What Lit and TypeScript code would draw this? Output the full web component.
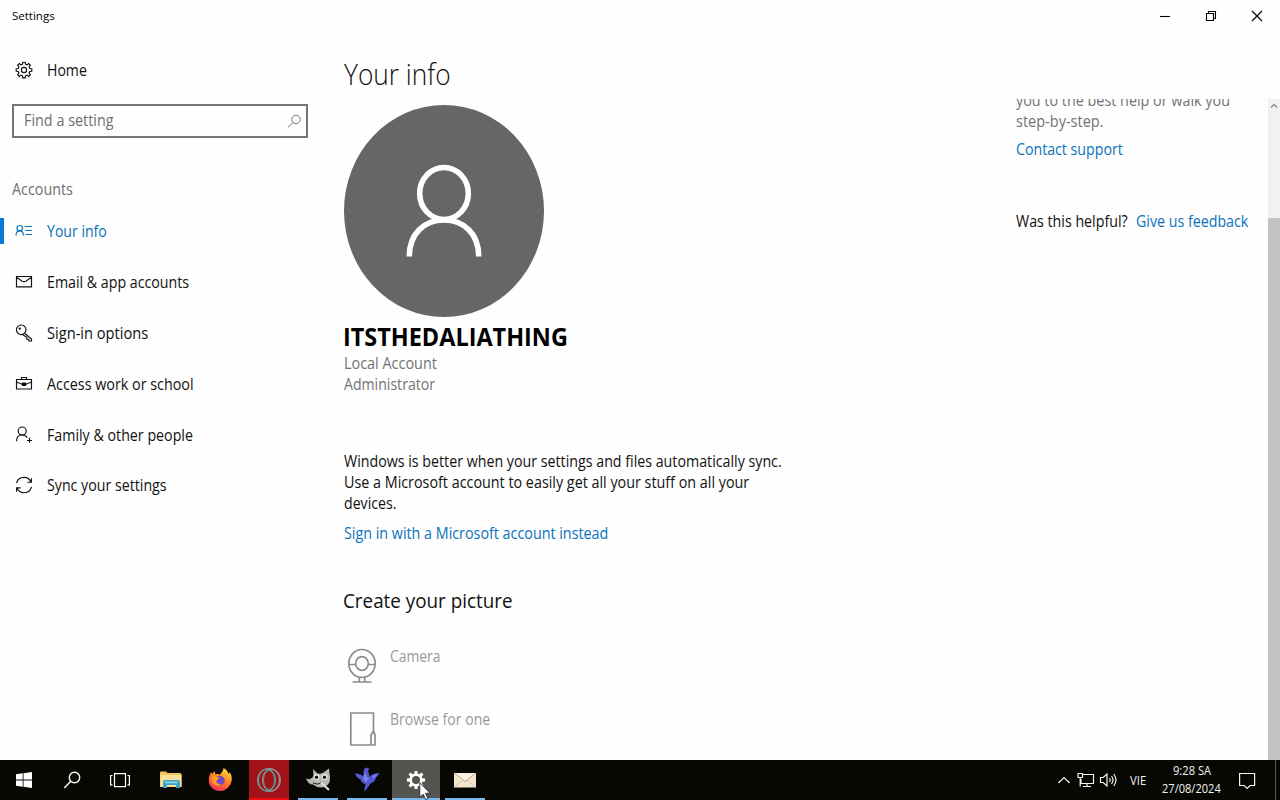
import { LitElement, html, css, svg } from 'lit';
import { customElement, property } from 'lit/decorators.js';

// One line of text, condensed or stretched to an exact width
@customElement('fit-text')
export class FitText extends LitElement {
  @property({ type: Number }) w = 0;

  static styles = css`
    :host {
      display: block;
      white-space: nowrap;
    }
    span {
      display: inline-block;
      transform-origin: 0 50%;
    }
  `;

  firstUpdated() {
    const span = this.renderRoot.querySelector('span')!;
    const natural = span.offsetWidth;
    if (!natural || !this.w) return;
    this.style.width = `${this.w}px`;
    span.style.transform = `scaleX(${this.w / natural})`;
  }

  render() {
    return html`<span><slot></slot></span>`;
  }
}

// points of a cog outline around (cx, cy)
const cog = (cx: number, cy: number, outer: number, inner: number, teeth: number) => {
  const pts: string[] = [];
  const step = (Math.PI * 2) / teeth;
  for (let i = 0; i < teeth; i++) {
    const a = i * step - Math.PI / 2;
    [[-0.32, inner], [-0.2, outer], [0.2, outer], [0.32, inner]].forEach(([d, r]) => {
      const t = a + d * step;
      pts.push(`${(cx + r * Math.cos(t)).toFixed(2)},${(cy + r * Math.sin(t)).toFixed(2)}`);
    });
  }
  return pts.join(' ');
};

const icons = {
  home: svg`<polygon points="${cog(9, 9, 7.9, 6, 8)}"/><circle cx="9" cy="9" r="2.6"/>`,
  info: svg`<circle cx="4.7" cy="6.2" r="2.7"/><path d="M1 13.500c0-2.8 1.4-4.6 3.7-4.6S8.4 10.700 8.4 13.500M9.5 4.500H17M10.5 8.500H17M10.5 12.500H17"/>`,
  mail: svg`<path d="M1.500 3.500h15v10.300h-15zM1.500 4.200 6.800 7.900q2.200 1.400 4.400 0l5.300-3.700"/>`,
  key: svg`<circle cx="6.2" cy="5.8" r="4.8"/><circle cx="4.8" cy="4.6" r=".6"/><path d="M9.6 9.2 16.5 15v2h-2.7v-1.8h-2v-2L7.5 10.4"/>`,
  work: svg`<path d="M1.500 4.500h15v9.500h-15zM6.500 4.500v-2h5v2M1.500 7l5.500 2.200h4L16.500 7M7.4 8.100h3.2v2.200H7.4z"/>`,
  family: svg`<circle cx="7.2" cy="5" r="4"/><path d="M1.500 15.3c0-3.8 2.2-6.3 5.7-6.3 2.3 0 3.9 1 4.9 2.6M14.500 11.8v5M12 14.500h5"/>`,
  sync: svg`<path d="M1.5 7.2C2.5 3.4 5.4 1.3 9 1.3c3.400 0 5.800 1.900 7 4.700M16.400 2.200V6.200H12.400M16.500 10.800C15.500 14.600 12.600 16.700 9 16.700c-3.400 0-5.800-1.900-7-4.700M1.600 15.800V11.800H5.600"/>`,
};

const navItems = [
  { icon: icons.info, label: 'Your info', w: 60, active: true },
  { icon: icons.mail, label: 'Email & app accounts', w: 142 },
  { icon: icons.key, label: 'Sign-in options', w: 101 },
  { icon: icons.work, label: 'Access work or school', w: 147 },
  { icon: icons.family, label: 'Family & other people', w: 146 },
  { icon: icons.sync, label: 'Sync your settings', w: 120 },
];

@customElement('settings-nav')
export class SettingsNav extends LitElement {
  static styles = css`
    :host {
      display: block;
      width: 320px;
    }
    .row {
      display: flex;
      align-items: center;
      height: 50.8px;
      box-sizing: border-box;
      padding-left: 15px;
      gap: 14px;
      position: relative;
    }
    .home {
      height: 32px;
      margin-top: 22px;
    }
    .row svg {
      fill: none;
      stroke: currentColor;
      stroke-width: 1.15;
      flex: none;
    }
    .active {
      color: #0a72bb;
    }
    .active::before {
      content: '';
      position: absolute;
      left: 0;
      top: 12px;
      width: 4px;
      height: 26px;
      background: #0a78d6;
    }
    .search {
      display: flex;
      align-items: center;
      justify-content: space-between;
      box-sizing: border-box;
      width: 296px;
      height: 34px;
      margin: 18px 0 0 12px;
      padding: 0 4px 2px 10px;
      border: 2px solid #767676;
      color: #707070;
    }
    .search svg {
      fill: none;
      stroke: #777;
      stroke-width: 1;
      margin-top: 2px;
    }
    .group {
      color: #707070;
      margin: 40px 0 6px 12px;
      line-height: 22px;
    }
  `;

  render() {
    return html`
      <div class="row home">
        <svg width="18" height="18">${icons.home}</svg>
        <fit-text w="40">Home</fit-text>
      </div>
      <div class="search">
        <fit-text w="90">Find a setting</fit-text>
        <svg width="15" height="15"><circle cx="9" cy="5.500" r="4.200"/><path d="M6 8.500.800 13.600"/></svg>
      </div>
      <div class="group"><fit-text w="61">Accounts</fit-text></div>
      ${navItems.map(
        (item) => html`
          <div class="row ${item.active ? 'active' : ''}">
            <svg width="18" height="18">${item.icon}</svg>
            <fit-text w=${item.w}>${item.label}</fit-text>
          </div>
        `
      )}
    `;
  }
}

@customElement('account-page')
export class AccountPage extends LitElement {
  static styles = css`
    :host {
      display: block;
      width: 672px;
      padding-left: 24px;
      box-sizing: border-box;
      overflow: hidden;
    }
    h1, h2, p {
      margin: 0;
      font-weight: 400;
    }
    h1 {
      font-size: 28.5px;
      font-weight: 300;
      line-height: 40px;
      margin-top: 22px;
    }
    .avatar {
      display: block;
      margin-top: 11px;
    }
    .name {
      font-size: 25px;
      font-weight: 700;
      line-height: 36px;
      color: #000;
      margin: 1px 0 0 -1px;
    }
    .role {
      color: #737373;
      line-height: 21px;
      margin-top: -1px;
    }
    .sync {
      line-height: 21px;
      margin-top: 56px;
    }
    a {
      display: block;
      color: #0a72bb;
      line-height: 21px;
      margin-top: 9px;
    }
    h2 {
      font-size: 20.5px;
      line-height: 28px;
      margin: 42px 0 0 -1px;
    }
    .source {
      display: flex;
      gap: 10px;
      color: #999;
      line-height: 21px;
      height: 63px;
    }
    .sources {
      margin-top: 32px;
    }
    .source svg {
      width: 36px;
      height: 40px;
      fill: none;
      stroke: #8c8c8c;
      stroke-width: 1.700;
    }
  `;

  render() {
    return html`
      <h1><fit-text w="107">Your info</fit-text></h1>
      <svg class="avatar" width="200" height="212" viewBox="0 0 200 212">
        <ellipse cx="100" cy="106" rx="100" ry="106" fill="#666"/>
        <g fill="none" stroke="#fff" stroke-width="5.600">
          <ellipse cx="100" cy="88.500" rx="24.300" ry="26"/>
          <path d="M65.300 151.500C65.300 129 80 115 100 115s34.700 14 34.700 36.500"/>
        </g>
      </svg>
      <p class="name"><fit-text w="225">ITSTHEDALIATHING</fit-text></p>
      <div class="role">
        <fit-text w="93">Local Account</fit-text>
        <fit-text w="91">Administrator</fit-text>
      </div>
      <div class="sync">
        <fit-text w="438">Windows is better when your settings and files automatically sync.</fit-text>
        <fit-text w="405">Use a Microsoft account to easily get all your stuff on all your</fit-text>
        <fit-text w="52">devices.</fit-text>
      </div>
      <a><fit-text w="264">Sign in with a Microsoft account instead</fit-text></a>
      <h2><fit-text w="170">Create your picture</fit-text></h2>
      <div class="sources">
        <div class="source">
          <svg>
            <ellipse cx="18" cy="17.500" rx="13.200" ry="14"/>
            <ellipse cx="18" cy="17.500" rx="6.300" ry="6.800"/>
            <path d="M4.800 18.500h6.500M24.700 18.500h6.500M15.300 31.500v4M20.700 31.500v4M8.500 36h19"/>
          </svg>
          <fit-text w="50">Camera</fit-text>
        </div>
        <div class="source">
          <svg>
            <path d="M29.500 21.500V4H6.800V36H31V26l-1.500-4-2.500 4v10"/>
          </svg>
          <fit-text w="100">Browse for one</fit-text>
        </div>
      </div>
    `;
  }
}

@customElement('help-pane')
export class HelpPane extends LitElement {
  static styles = css`
    :host {
      display: flex;
      flex: 1;
      margin-top: 67px;
      overflow: hidden;
      justify-content: space-between;
    }
    .text {
      line-height: 21px;
      margin-top: -9px;
    }
    .muted {
      color: #737373;
    }
    .link {
      color: #0a72bb;
    }
    .contact {
      margin-top: 7px;
    }
    .feedback {
      display: flex;
      gap: 8px;
      margin-top: 51px;
    }
    .bar {
      width: 12px;
      background: #f1f1f1;
      display: flex;
      flex-direction: column;
      justify-content: space-between;
    }
    .bar svg {
      fill: none;
      stroke: #888;
      stroke-width: 1.300;
    }
    .thumb {
      height: 542px;
      background: #c2c2c2;
    }
  `;

  render() {
    return html`
      <div class="text">
        <div class="muted">
          <fit-text w="214">you to the best help or walk you</fit-text>
          <fit-text w="88">step-by-step.</fit-text>
        </div>
        <div class="link contact"><fit-text w="107">Contact support</fit-text></div>
        <div class="feedback">
          <fit-text w="112">Was this helpful?</fit-text>
          <fit-text class="link" w="112">Give us feedback</fit-text>
        </div>
      </div>
      <div class="bar">
        <svg width="12" height="14"><path d="M3 8.500 6 5.500l3 3"/></svg>
        <div class="thumb"></div>
      </div>
    `;
  }
}

@customElement('task-bar')
export class TaskBar extends LitElement {
  static styles = css`
    :host {
      display: flex;
      justify-content: space-between;
      height: 40px;
      background: #070804;
      color: #f2f2f2;
      font-size: 12px;
      position: relative;
    }
    .apps, .tray {
      display: flex;
    }
    .app {
      width: 40px;
      height: 40px;
      margin-right: 9px;
      box-sizing: border-box;
    }
    .app svg {
      display: block;
      width: 40px;
      height: 38px;
    }
    .wide {
      width: 48px;
      margin-right: 0;
    }
    .wide svg {
      width: 48px;
    }
    .explorer {
      margin-left: 7px;
    }
    .open {
      border-bottom: 2px solid #76b9ed;
    }
    .opera {
      background: #a01218;
      border-bottom: 2px solid #f00b10;
    }
    .current {
      background: #545550;
      margin-left: -4px;
      margin-right: 5px;
    }
    .tray {
      align-items: center;
    }
    .tray > svg {
      fill: none;
      stroke: #f2f2f2;
      stroke-width: 1.200;
    }
    .net {
      margin-right: 3px;
    }
    .lang {
      margin: 0 16px 0 12px;
    }
    .clock {
      display: flex;
      flex-direction: column;
      align-items: center;
      line-height: 18px;
      margin: 0 18px 0 0;
    }
    .desktop {
      height: 40px;
      width: 4px;
      margin-left: 19px;
      border-left: 1px solid #55564f;
    }
    .cursor {
      position: absolute;
      left: 419px;
      top: 22px;
    }
  `;

  render() {
    return html`
      <div class="apps">
        <div class="app wide">
          <svg fill="#fff"><path d="M16 14.300l6.700-1v6.300H16zM23.500 13.200l8.500-1.200v7.600h-8.500zM16 20.500h6.700v6.300l-6.700-1zM23.500 20.500H32V28l-8.500-1.200z"/></svg>
        </div>
        <div class="app wide">
          <svg fill="none" stroke="#fff" stroke-width="1.400"><circle cx="26.500" cy="17.500" r="5.200"/><path d="M22.700 21.300 16.300 28"/></svg>
        </div>
        <div class="app wide">
          <svg fill="none" stroke="#fff" stroke-width="1.200"><path d="M18.500 13.600h11v13h-11zM16.500 15.500H14.600v9.400h1.900M31.500 15.500h1.900v9.400h-1.900"/></svg>
        </div>
        <div class="app explorer">
          <svg>
            <path d="M9 12.500q0-1 1-1h5l1.500 1.500H29q1.500 0 1.500 1.500V27H9z" fill="#efc65e"/>
            <path d="M9.500 15h21v12h-21z" fill="#fbe09a"/>
            <path d="M12 28v-6q0-2 2-2h13q2 0 2 2v6h-4v-3h-9v3z" fill="#3fa4c9"/>
            <path d="M14 21.500h12.500v1.700H14z" fill="#8bd3e6"/>
          </svg>
        </div>
        <div class="app">
          <svg>
            <defs>
              <linearGradient id="fox" x1=".8" y1="0" x2=".3" y2="1">
                <stop offset="0" stop-color="#ffe14a"/>
                <stop offset=".45" stop-color="#ff8a1e"/>
                <stop offset="1" stop-color="#f52a5c"/>
              </linearGradient>
            </defs>
            <path d="M23.500 8c4.500 2.500 4 4.500 5.500 6 .5-.7.500-1.500.400-2.200 3.600 4.700 2.600 10.500.300 13.700C27.600 29 24 31 20 31 13.500 31 8.800 26.300 8.800 20c0-3.500 1-6 2.700-8l.4 2.200L14.500 11l1 3.200c1.500-.5 3-.3 4.500.5 1.500-2.500 3.500-3.500 3.500-6.700z" fill="url(#fox)"/>
            <path d="M15.500 17.500q4-3 7.500-.5c2.500 2 2.300 6-.5 7.500-3 1.500-6.500 0-7-3l2.500-1.500z" fill="#7149c7"/>
            <path d="M11.500 17q3-2 4.500 0l3.500.5q-.5 2-3.500 3 .5 4 5.500 3.500-4 3-7.500.5-2.500-2-2.500-7.500z" fill="#ff9a22"/>
          </svg>
        </div>
        <div class="app opera">
          <svg fill="none" stroke-width="1.100">
            <circle cx="20" cy="20" r="11.500" stroke="#8d8580"/>
            <ellipse cx="18" cy="20" rx="8.500" ry="11" stroke="#4fa6a0"/>
            <ellipse cx="22" cy="20" rx="8.500" ry="11" stroke="#a79a94"/>
            <ellipse cx="20" cy="20" rx="5.500" ry="9.500" stroke="#598f90"/>
          </svg>
        </div>
        <div class="app open">
          <svg>
            <path d="M8 18.500l3 .7q3-.5 4.500-3L15 9l4.500 4.500q3 .5 5.500-.7L31 8.500l1 9q.5 7-5.500 9.500-7 1.500-11.500-2.500-5 0-7-6z" fill="#b9b8b0"/>
            <circle cx="18.500" cy="17" r="3" fill="#eee"/><circle cx="26.500" cy="17" r="3" fill="#eee"/>
            <circle cx="18.500" cy="17.300" r="1.700" fill="#111"/><circle cx="26.500" cy="17.300" r="1.700" fill="#111"/>
            <path d="M15 23q5 2.500 9-.5" fill="none" stroke="#222"/>
            <path d="M23 22.500 31 30" stroke="#ddd" stroke-width="2.200"/>
          </svg>
        </div>
        <div class="app open">
          <svg>
            <path d="M8 13.500q5-.5 8.500 3l.2-6q.3-2.500 3-3l3 1.500-1.700 1.200 1.500 6.500q3-3.500 10-3.700-1.500 3-3.500 4.500-1 4.500-5.500 6L19 30l-2 1.500 1.500-7.200q-4-1-5-4.800-4-1.500-5.500-6z" fill="#5557cf"/>
            <path d="M17.500 11.500 20 17l2.500 1-3.500 4-3-2.500zM25 16l5-1.500-3 4z" fill="#7e82ee"/>
          </svg>
        </div>
        <div class="app wide open current">
          <svg><polygon points="${cog(24, 20, 9.2, 6.6, 8)}" fill="#fff"/><circle cx="24" cy="20" r="4" fill="#545550"/></svg>
        </div>
        <div class="app open">
          <svg>
            <path d="M9 13h22v14.500H9z" fill="#f4e6cf"/>
            <path d="M9 27.500l8.500-7M31 27.500 22.500 20.500" stroke="#dcc6a8" fill="none"/>
            <path d="M9.500 13.500l10.700 8 10.300-8" stroke="#c9a884" fill="#fbf2e2"/>
          </svg>
        </div>
      </div>
      <div class="tray">
        <svg width="14" height="20"><path d="M1.500 13 7 7.500l5.500 5.500"/></svg>
        <svg class="net" width="24" height="20"><path d="M12 4.500h10.500v9H10V9M16 13.500v3M12 16.500h8M7 3.500h4.500v4H7zM9.200 7.500v9"/></svg>
        <svg width="20" height="20"><path d="M2.500 7.500h2.700L9 4v12l-3.800-3.500H2.500zM11.500 8q1.500 2 0 4M13.500 6q3 4 0 8M15.700 4q4.500 6 0 12"/></svg>
        <fit-text class="lang" w="16">VIE</fit-text>
        <div class="clock">
          <fit-text w="38">9:28 SA</fit-text>
          <fit-text w="59">27/08/2024</fit-text>
        </div>
        <svg width="17" height="20"><path d="M.6 3.500h15v12h-4.500l-3 3-3-3H.6z"/></svg>
        <div class="desktop"></div>
      </div>
      <svg class="cursor" width="13" height="18"><path d="M.8.800v14.500l3.400-3.100 2.500 5.300 2.200-1-2.400-5.200h4.600z" fill="#fff" stroke="#222" stroke-width=".8"/></svg>
    `;
  }
}

@customElement('app-root')
export class AppRoot extends LitElement {
  static styles = css`
    :host {
      display: flex;
      flex-direction: column;
      width: 1280px;
      height: 800px;
      overflow: hidden;
      background: #fefefe;
      color: #111;
      font-family: 'Open Sans', 'Noto Sans', sans-serif;
      font-size: 15.5px;
    }
    .title {
      display: flex;
      align-items: center;
      justify-content: space-between;
      height: 32px;
      padding: 0 16px 0 12px;
      font-size: 11.5px;
      line-height: 14px;
      color: #000;
    }
    .buttons {
      display: flex;
      gap: 32px;
    }
    .buttons svg {
      fill: none;
      stroke: #000;
      stroke-width: 1.1;
    }
    .body {
      display: flex;
      flex: 1;
      min-height: 0;
    }
    help-pane {
      margin-left: 24px;
    }
  `;

  render() {
    return html`
      <div class="title">
        <fit-text w="43">Settings</fit-text>
        <div class="buttons">
          <svg width="14" height="14"><path d="M2 7.500h10"/></svg>
          <svg width="14" height="14"><path d="M2.500 4.500h7v7h-7zM4.500 4.500v-2h7v7h-2"/></svg>
          <svg width="14" height="14"><path d="M2 2l10 10M12 2 2 12"/></svg>
        </div>
      </div>
      <div class="body">
        <settings-nav></settings-nav>
        <account-page></account-page>
        <help-pane></help-pane>
      </div>
      <task-bar></task-bar>
    `;
  }
}
